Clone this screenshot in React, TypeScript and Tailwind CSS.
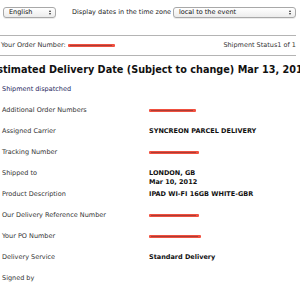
import React from "react";

const font = { fontFamily: '"DejaVu Sans", Verdana, sans-serif' };

function Select({ label, className }: { label: string; className: string }) {
  return (
    <div
      className={`flex items-center justify-between h-[11px] rounded-[3px] border border-[#a8a8a8] bg-gradient-to-b from-white to-[#ececec] pl-[5px] pr-[4px] shadow-[0_1px_0_rgba(0,0,0,0.08)] ${className}`}
    >
      <span className="text-[6.5px] leading-none text-[#111]">{label}</span>
      <span className="flex flex-col items-center gap-[1px]">
        <span className="block w-0 h-0 border-l-[1.5px] border-r-[1.5px] border-b-[2px] border-l-transparent border-r-transparent border-b-[#333]" />
        <span className="block w-0 h-0 border-l-[1.5px] border-r-[1.5px] border-t-[2px] border-l-transparent border-r-transparent border-t-[#333]" />
      </span>
    </div>
  );
}

function Redacted({ w }: { w: number }) {
  return (
    <span className="relative inline-block h-[5px] align-middle" style={{ width: w }}>
      <span className="absolute left-0 right-0 top-[1px] h-[3px] rounded-[1px] bg-[#f0503f]" />
      <span className="absolute left-[2px] right-[3px] top-[2px] h-px bg-[#7a3030] opacity-60" />
    </span>
  );
}

function Row({ label, children }: { label: string; children?: React.ReactNode }) {
  return (
    <div className="flex h-[21px] pt-[6px] text-[6.5px] leading-[9px]">
      <div className="w-[149px] pl-[2px] text-[#333]">{label}</div>
      <div className="font-bold text-[#111]">{children}</div>
    </div>
  );
}

export default function App() {
  return (
    <div className="w-[300px] h-[300px] overflow-hidden bg-white" style={font}>
      <div className="flex items-center pt-[7px] pr-[4px]">
        <Select label="English" className="ml-[3px] w-[53px]" />
        <span className="ml-[16px] text-[6.5px] text-[#222] whitespace-nowrap">
          Display dates in the time zone
        </span>
        <Select label="local to the event" className="ml-auto w-[123px]" />
      </div>
      <div className="mr-[4px] mt-[17px] h-px bg-[#b4b4b4]" />
      <div className="flex items-center justify-between h-[19px] pl-[1px] pr-[4px] text-[6.5px] text-[#333]">
        <span className="flex items-center">
          Your Order Number:&nbsp;<Redacted w={47} />
        </span>
        <span>Shipment Status1 of 1</span>
      </div>
      <div className="mr-[4px] h-px bg-[#b4b4b4]" />
      <div className="flex justify-center h-[22px] items-center whitespace-nowrap pt-[6px]">
        <span className="text-[9.7px] font-bold text-[#111]">
          Estimated Delivery Date (Subject to change) Mar 13, 2012
        </span>
      </div>
      <div className="pl-[2px] pt-[7px] text-[6.5px] leading-[9px] text-[#1d1d5c]">Shipment dispatched</div>
      <div className="mt-[6px]">
        <Row label="Additional Order Numbers">
          <Redacted w={47} />
        </Row>
        <Row label="Assigned Carrier">SYNCREON PARCEL DELIVERY</Row>
        <Row label="Tracking Number">
          <Redacted w={50} />
        </Row>
        <Row label="Shipped to">
          <div>LONDON, GB</div>
          <div>Mar 10, 2012</div>
        </Row>
        <Row label="Product Description">IPAD WI-FI 16GB WHITE-GBR</Row>
        <Row label="Our Delivery Reference Number">
          <Redacted w={50} />
        </Row>
        <Row label="Your PO Number">
          <Redacted w={52} />
        </Row>
        <Row label="Delivery Service">Standard Delivery</Row>
        <Row label="Signed by" />
      </div>
    </div>
  );
}
